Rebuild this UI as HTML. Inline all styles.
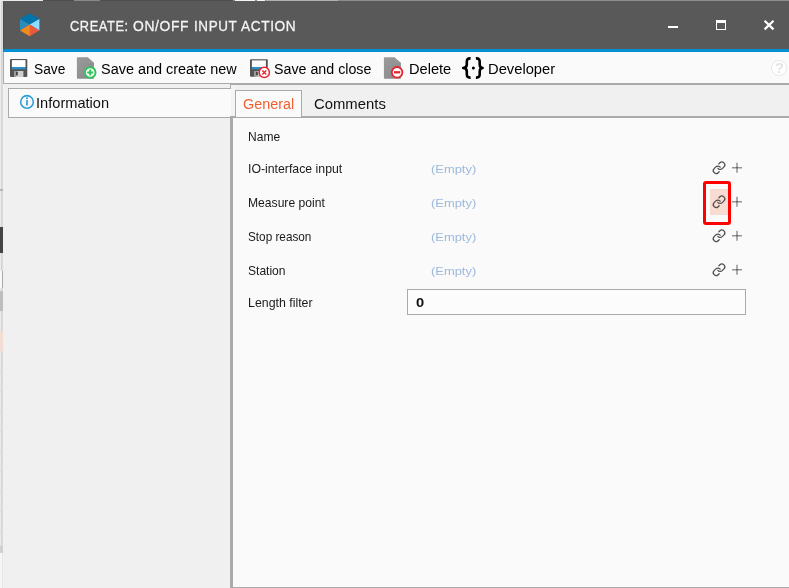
<!DOCTYPE html>
<html lang="en"><head><meta charset="utf-8"><title>Create: On/Off input action</title>
<style>
html,body{margin:0;padding:0}
body{width:789px;height:588px;overflow:hidden;position:relative;background:#f0f0f0;font-family:"Liberation Sans",sans-serif}
.a{position:absolute;display:block}
.t{position:absolute;white-space:nowrap;transform-origin:0 0;line-height:normal;font-family:"Liberation Sans",sans-serif}
svg{position:absolute;overflow:visible}
#txt{position:absolute;left:0;top:0;width:789px;height:588px;will-change:transform}

</style></head>
<body>
<!-- background strip behind the dialog -->
<div class="a" style="left:0;top:0;width:1px;height:588px;background:#ebebeb"></div><div class="a" style="left:1px;top:0;width:1px;height:588px;background:#d5d5d5"></div><div class="a" style="left:2px;top:0;width:1px;height:588px;background:#dcdcdc"></div>
<div class="a" style="left:0;top:189px;width:3px;height:2px;background:#b5b5b5"></div>
<div class="a" style="left:0;top:227px;width:3px;height:26px;background:#444"></div>
<div class="a" style="left:0;top:271px;width:2px;height:17px;background:#f8f8f8;border-right:1px solid #aaa"></div>
<div class="a" style="left:0;top:291px;width:3px;height:20px;background:#bdbdbd"></div>
<div class="a" style="left:0;top:331px;width:3px;height:20px;background:#f3dcd2"></div>
<div class="a" style="left:0;top:352px;width:3px;height:190px;background:repeating-linear-gradient(180deg,transparent 0,transparent 19px,#dadada 19px,#dadada 20px)"></div>
<div class="a" style="left:0;top:546px;width:3px;height:7px;background:#d0d0d0"></div>
<div class="a" style="left:0;top:553px;width:2px;height:35px;background:#f6f6f6"></div>
<div class="a" style="left:2px;top:553px;width:1px;height:35px;background:#e6e6e6"></div>
<div class="a" style="left:0;top:0;width:789px;height:1px;background:#8e8e8e"></div>
<div class="a" style="left:0;top:0;width:43px;height:1px;background:#ececec"></div>
<div class="a" style="left:43px;top:0;width:190px;height:1px;background:#4d4f4e"></div>
<div class="a" style="left:74px;top:0;width:26px;height:1px;background:#8a8a8a"></div>
<div class="a" style="left:235px;top:0;width:20px;height:1px;background:#f4f4f4"></div>
<div class="a" style="left:257px;top:0;width:8px;height:1px;background:#f4f4f4"></div>
<div class="a" style="left:266px;top:0;width:72px;height:1px;background:#b0b0b0"></div>

<!-- title bar -->
<div class="a" style="left:3px;top:1px;width:786px;height:48px;background:#595959;border-left:1px solid #515151;box-sizing:border-box"></div>
<div class="a" style="left:3px;top:49px;width:786px;height:3px;background:#0090d3"></div>
<!-- logo -->
<svg style="left:18px;top:12px" width="24" height="26" viewBox="18 12 24 26">
 <polygon points="29.7,13.6 39.4,19 29.7,24.4 20,19" fill="#0073a8" stroke="#0073a8" stroke-width=".5" stroke-linejoin="round"/>
 <polygon points="20,19 29.7,24.4 20,30.6" fill="#2b8bba"/>
 <polygon points="39.4,19 39.4,30.6 29.7,24.4" fill="#8edcff"/>
 <polygon points="20,30.6 29.7,24.4 30.2,24.4 30.2,36 29.7,36.3" fill="#f08b1d"/>
 <polygon points="39.4,30.6 29.7,36.3 29.7,24.4" fill="#e9593b"/>
</svg>
<!-- window buttons -->
<div class="a" style="left:668px;top:25.5px;width:10px;height:2.5px;background:#fff"></div>
<div class="a" style="left:715.9px;top:20px;width:10.4px;height:10.1px;box-sizing:border-box;border:1.4px solid #fff;border-top:3.1px solid #fff"></div>
<svg style="left:763px;top:19px" width="12" height="12" viewBox="763 19 12 12"><path d="M764.6 20.7 L773.5 29.4 M773.5 20.7 L764.6 29.4" stroke="#fff" stroke-width="2.2" fill="none"/></svg>

<!-- toolbar -->
<div class="a" style="left:3px;top:52px;width:786px;height:31px;background:#fafafa"></div>
<div class="a" style="left:3px;top:52px;width:1px;height:32px;background:#aaa"></div>
<div class="a" style="left:3px;top:83px;width:786px;height:1px;background:#aaa"></div>
<div class="a" style="left:231px;top:84px;width:558px;height:1px;background:#aaa"></div>

<!-- save icon -->
<svg style="left:10px;top:59px" width="18" height="18" viewBox="0 0 18 18">
 <rect x="0" y="0" width="17.3" height="18" rx="1" fill="#555"/>
 <rect x="1.9" y="1.1" width="13.6" height="7" fill="#fff"/>
 <rect x="1.9" y="8" width="13.6" height="2.3" fill="#2a8fc8"/>
 <rect x="4.1" y="12" width="9.3" height="6" fill="#cfcfcf"/>
 <rect x="4.1" y="12" width="2" height="6" fill="#999"/>
 <rect x="6" y="12.6" width="1.8" height="3.8" fill="#444"/>
</svg>
<!-- save and create new icon -->
<svg style="left:77px;top:57px" width="20" height="22" viewBox="77 57 20 22">
 <defs><linearGradient id="pg" x1="0" y1="0" x2="1" y2="1"><stop offset="0" stop-color="#9b9b9b"/><stop offset="1" stop-color="#888"/></linearGradient></defs>
 <path d="M77.6 57.2 H87.6 L94 63 V78 a.7 .7 0 0 1 -.7 .7 H77.6 a.7 .7 0 0 1 -.7 -.7 V57.9 a.7 .7 0 0 1 .7 -.7z" fill="url(#pg)"/>
 <path d="M87.6 57.2 L94 63 H88.4 a.8 .8 0 0 1 -.8 -.8z" fill="#979797"/>
 <circle cx="90.2" cy="72.5" r="5.3" fill="#fff" stroke="#2fc45c" stroke-width="1.9"/>
 <path d="M87.2 72.5 H93.2 M90.2 69.5 V75.5" stroke="#2fc45c" stroke-width="2"/>
</svg>
<!-- save and close icon -->
<svg style="left:250px;top:59px" width="21" height="20" viewBox="0 0 21 20">
 <rect x="0" y="0.2" width="17.8" height="17.6" rx="1" fill="#555"/>
 <rect x="1.9" y="1.4" width="14" height="6.6" fill="#fbfbfb"/>
 <rect x="1.9" y="8" width="14" height="2.3" fill="#2a8fc8"/>
 <rect x="4.1" y="12" width="9.3" height="5.8" fill="#cfcfcf"/>
 <rect x="4.1" y="12" width="2" height="5.8" fill="#999"/>
 <rect x="6" y="12.6" width="1.8" height="3.8" fill="#444"/>
 <circle cx="14.3" cy="13.4" r="5.1" fill="#fff" stroke="#e8252f" stroke-width="1.5"/>
 <path d="M12.3 11.4 L16.3 15.4 M16.3 11.4 L12.3 15.4" stroke="#e8252f" stroke-width="1.4"/>
</svg>
<!-- delete icon -->
<svg style="left:383px;top:57px" width="21" height="22" viewBox="383 57 21 22">
 <path d="M384.6 57.2 H394.2 L400.9 63 V78 a.7 .7 0 0 1 -.7 .7 H384.6 a.7 .7 0 0 1 -.7 -.7 V57.9 a.7 .7 0 0 1 .7 -.7z" fill="url(#pg)"/>
 <path d="M394.2 57.2 L400.9 63 H395 a.8 .8 0 0 1 -.8 -.8z" fill="#979797"/>
 <circle cx="397.1" cy="72.3" r="5.3" fill="#fff" stroke="#e8252f" stroke-width="1.8"/>
 <path d="M394 72.3 H400.2" stroke="#e8252f" stroke-width="2.3"/>
</svg>
<!-- developer icon -->
<svg style="left:461px;top:56px" width="24" height="24" viewBox="461 56 24 24">
 <path d="M470.6 58.4 C467.2 58.2 466.8 60 466.8 62 V64.6 C466.8 66.6 465.6 67.9 463.2 68 C465.6 68.1 466.8 69.4 466.8 71.4 V74 C466.8 76 467.2 77.8 470.6 77.6" stroke="#000" stroke-width="2.6" fill="none" stroke-linejoin="round"/>
 <path d="M475.9 58.4 C479.3 58.2 479.7 60 479.7 62 V64.6 C479.7 66.6 480.6 67.9 482.6 68 C480.6 68.1 479.7 69.4 479.7 71.4 V74 C479.7 76 479.3 77.8 475.9 77.6" stroke="#000" stroke-width="2.6" fill="none" stroke-linejoin="round"/>
 <circle cx="473.4" cy="68" r="1.5" fill="#000"/>
</svg>
<!-- help icon -->
<div class="a" style="left:771.1px;top:60px;width:15.9px;height:15.9px;border-radius:50%;border:1.2px solid #e9e9e9;box-sizing:border-box;background:#fff"></div>

<!-- left panel -->
<div class="a" style="left:8px;top:88px;width:222px;height:28px;background:#fafafa;border:1px solid #aaa;border-right:none"></div>
<div class="a" style="left:230px;top:84px;width:1px;height:5px;background:#aaa"></div>
<div class="a" style="left:231px;top:85px;width:4px;height:31px;background:#f4f4f4"></div>
<svg style="left:19px;top:94px" width="16" height="16" viewBox="19 94 16 16">
 <circle cx="27" cy="101.9" r="6.3" fill="none" stroke="#2a9fd8" stroke-width="1.55"/>
 <rect x="26.15" y="100.1" width="1.7" height="5.4" fill="#2a9fd8"/>
 <circle cx="27" cy="98.3" r="1.05" fill="#2a9fd8"/>
</svg>

<!-- tab strip + content -->
<div class="a" style="left:235px;top:90px;width:65px;height:27px;background:#fafafa;border:1px solid #aaa;border-bottom:none"></div>
<div class="a" style="left:230px;top:116px;width:559px;height:472px;background:#aaa"></div>
<div class="a" style="left:233px;top:118px;width:556px;height:469px;background:#fafafa"></div>
<div class="a" style="left:236px;top:116px;width:65px;height:1px;background:#fafafa"></div>

<!-- row icons -->
<div class="a" style="left:703px;top:181px;width:22px;height:38px;border:3px solid #f00;border-radius:3px;background:#fafafa"></div>
<div class="a" style="left:710px;top:189px;width:18px;height:26px;background:#f9dcd1"></div>

<svg style="left:0;top:0" width="789" height="588" viewBox="0 0 789 588">
 <g transform="translate(719.05 167.75) scale(0.577) translate(-12 -12)" fill="none" stroke="#4f4f4f" stroke-width="2.2" stroke-linecap="round" stroke-linejoin="round"><path d="M10 13a5 5 0 0 0 7.54.54l3-3a5 5 0 0 0-7.07-7.07l-1.72 1.71"/><path d="M14 11a5 5 0 0 0-7.54-.54l-3 3a5 5 0 0 0 7.07 7.07l1.71-1.71"/></g>
 <path d="M732 167.8 H742" stroke="#000" stroke-opacity=".53" stroke-width="1.15" fill="none"/><path d="M737 162.8 V172.8" stroke="#000" stroke-opacity=".53" stroke-width="1.15" fill="none"/>
 <g transform="translate(719.05 201.75) scale(0.577) translate(-12 -12)" fill="none" stroke="#4f4f4f" stroke-width="2.2" stroke-linecap="round" stroke-linejoin="round"><path d="M10 13a5 5 0 0 0 7.54.54l3-3a5 5 0 0 0-7.07-7.07l-1.72 1.71"/><path d="M14 11a5 5 0 0 0-7.54-.54l-3 3a5 5 0 0 0 7.07 7.07l1.71-1.71"/></g>
 <path d="M732 201.8 H742" stroke="#000" stroke-opacity=".53" stroke-width="1.15" fill="none"/><path d="M737 196.8 V206.8" stroke="#000" stroke-opacity=".53" stroke-width="1.15" fill="none"/>
 <g transform="translate(719.05 235.75) scale(0.577) translate(-12 -12)" fill="none" stroke="#4f4f4f" stroke-width="2.2" stroke-linecap="round" stroke-linejoin="round"><path d="M10 13a5 5 0 0 0 7.54.54l3-3a5 5 0 0 0-7.07-7.07l-1.72 1.71"/><path d="M14 11a5 5 0 0 0-7.54-.54l-3 3a5 5 0 0 0 7.07 7.07l1.71-1.71"/></g>
 <path d="M732 235.8 H742" stroke="#000" stroke-opacity=".53" stroke-width="1.15" fill="none"/><path d="M737 230.8 V240.8" stroke="#000" stroke-opacity=".53" stroke-width="1.15" fill="none"/>
 <g transform="translate(719.05 269.75) scale(0.577) translate(-12 -12)" fill="none" stroke="#4f4f4f" stroke-width="2.2" stroke-linecap="round" stroke-linejoin="round"><path d="M10 13a5 5 0 0 0 7.54.54l3-3a5 5 0 0 0-7.07-7.07l-1.72 1.71"/><path d="M14 11a5 5 0 0 0-7.54-.54l-3 3a5 5 0 0 0 7.07 7.07l1.71-1.71"/></g>
 <path d="M732 269.8 H742" stroke="#000" stroke-opacity=".53" stroke-width="1.15" fill="none"/><path d="M737 264.8 V274.8" stroke="#000" stroke-opacity=".53" stroke-width="1.15" fill="none"/>
</svg>

<!-- length filter input -->
<div class="a" style="left:407px;top:289px;width:337px;height:24px;border:1px solid #aaa;background:#fcfcfc"></div>

<div id="txt">
<span class="ttl"><span id="t_ti1" class="t" style="left:70px;top:17.00px;font-size:15.5px;color:#f4f4f4;font-weight:400;-webkit-text-stroke:.3px #f4f4f4;letter-spacing:.7px;transform:scaleX(0.8277)">CREATE:</span> <span id="t_ti2" class="t" style="left:133px;top:17.00px;font-size:15.5px;color:#f4f4f4;font-weight:400;-webkit-text-stroke:.3px #f4f4f4;letter-spacing:.7px;transform:scaleX(0.8949)">ON/OFF</span> <span id="t_ti3" class="t" style="left:194px;top:17.00px;font-size:15.5px;color:#f4f4f4;font-weight:400;-webkit-text-stroke:.3px #f4f4f4;letter-spacing:.7px;transform:scaleX(0.8682)">INPUT</span> <span id="t_ti4" class="t" style="left:241px;top:17.00px;font-size:15.5px;color:#f4f4f4;font-weight:400;-webkit-text-stroke:.3px #f4f4f4;letter-spacing:.7px;transform:scaleX(0.8820)">ACTION</span></span>
<span id="t_save" class="t" style="left:34px;top:60.00px;font-size:15.3px;color:#000;font-weight:400;transform:scaleX(0.8992)">Save</span>
<span id="t_scn" class="t" style="left:101px;top:60.00px;font-size:15.3px;color:#000;font-weight:400;transform:scaleX(0.9442)">Save and create new</span>
<span id="t_sc" class="t" style="left:274px;top:60.00px;font-size:15.3px;color:#000;font-weight:400;transform:scaleX(0.9313)">Save and close</span>
<span id="t_del" class="t" style="left:409px;top:60.00px;font-size:15.3px;color:#000;font-weight:400;transform:scaleX(0.9556)">Delete</span>
<span id="t_dev" class="t" style="left:488px;top:60.00px;font-size:15.3px;color:#000;font-weight:400;transform:scaleX(0.9627)">Developer</span>
<span id="t_info" class="t" style="left:36px;top:95.00px;font-size:14.1px;color:#111;font-weight:400;transform:scaleX(1.0370)">Information</span>
<span id="t_gen" class="t" style="left:243px;top:95.00px;font-size:15.3px;color:#f0602f;font-weight:400;transform:scaleX(0.9398)">General</span>
<span id="t_com" class="t" style="left:314px;top:95.00px;font-size:15.3px;color:#111;font-weight:400;transform:scaleX(0.9710)">Comments</span>
<span id="t_name" class="t" style="left:248px;top:129.00px;font-size:13.3px;color:#1a1a1a;font-weight:400;transform:scaleX(0.9047)">Name</span>
<span id="t_io" class="t" style="left:248px;top:161.00px;font-size:13.3px;color:#1a1a1a;font-weight:400;transform:scaleX(0.9237)">IO-interface input</span>
<span id="t_mp" class="t" style="left:248px;top:195.00px;font-size:13.3px;color:#1a1a1a;font-weight:400;transform:scaleX(0.9114)">Measure point</span>
<span id="t_sr" class="t" style="left:248px;top:229.00px;font-size:13.3px;color:#1a1a1a;font-weight:400;transform:scaleX(0.8839)">Stop reason</span>
<span id="t_st" class="t" style="left:248px;top:263.00px;font-size:13.3px;color:#1a1a1a;font-weight:400;transform:scaleX(0.9067)">Station</span>
<span id="t_lf" class="t" style="left:248px;top:295.00px;font-size:13.3px;color:#1a1a1a;font-weight:400;transform:scaleX(0.9298)">Length filter</span>
<span id="t_e1" class="t" style="left:431px;top:162.00px;font-size:11.6px;color:#9db9dc;font-weight:400;transform:scaleX(1.1144)">(Empty)</span>
<span id="t_e2" class="t" style="left:431px;top:196.00px;font-size:11.6px;color:#9db9dc;font-weight:400;transform:scaleX(1.1144)">(Empty)</span>
<span id="t_e3" class="t" style="left:431px;top:230.00px;font-size:11.6px;color:#9db9dc;font-weight:400;transform:scaleX(1.1144)">(Empty)</span>
<span id="t_e4" class="t" style="left:431px;top:264.00px;font-size:11.6px;color:#9db9dc;font-weight:400;transform:scaleX(1.1144)">(Empty)</span>
<span id="t_zero" class="t" style="left:416px;top:296.00px;font-size:12.4px;color:#111;font-weight:700;transform:scaleX(1.1868)">0</span>
<span id="t_q" class="t" style="left:775px;top:61.00px;font-size:13.8px;color:#e3e3e3;font-weight:700;transform:scaleX(1.0500)">?</span>
</div>
</body></html>
